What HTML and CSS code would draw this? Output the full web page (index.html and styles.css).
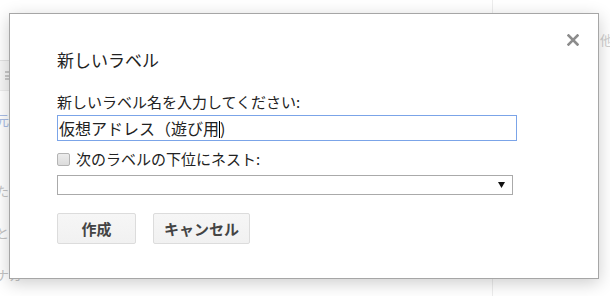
FILE: index.html
```html
<!DOCTYPE html>
<html lang="ja">
<head>
<meta charset="utf-8">
<title>新しいラベル</title>
<link rel="stylesheet" href="styles.css">
</head>
<body>
<div class="page">
  <div class="main">
    <div class="left">
      <div class="left-top"></div>
      <div class="toolbar"><span class="bars"></span></div>
      <div class="nav nav-blue">元</div>
      <div class="nav nav-1">たし</div>
      <div class="nav nav-2">とイ</div>
      <div class="nav nav-3">ナカ</div>
    </div>
  </div>
  <div class="rail"><span class="rail-text">他</span></div>
</div>

<div class="dialog" role="dialog">
  <button class="close" aria-label="閉じる">
    <svg width="12" height="12" viewBox="0 0 12 12"><path d="M1.5 1.5L10.5 10.5M10.5 1.5L1.5 10.5" stroke="#8c8c8c" stroke-width="2.6" stroke-linecap="square"/></svg>
  </button>
  <div class="title">新しいラベル</div>
  <div class="label">新しいラベル名を入力してください:</div>
  <div class="input">仮想アドレス（遊び用<span class="caret"></span>)</div>
  <div class="check-row"><span class="checkbox"></span><span>次のラベルの下位にネスト:</span></div>
  <div class="select"><svg class="arrow" width="7" height="6" viewBox="0 0 7 6"><path d="M0 0H7L3.5 6Z" fill="#111"/></svg></div>
  <div class="buttons">
    <button class="btn">作成</button>
    <button class="btn">キャンセル</button>
  </div>
</div>
</body>
</html>
```

FILE: styles.css
```css
* { box-sizing: border-box; }

html, body {
  margin: 0;
  padding: 0;
}

body {
  width: 610px;
  height: 296px;
  overflow: hidden;
  position: relative;
  background: #fff;
  font-family: "Noto Sans CJK JP", "Noto Sans", sans-serif;
  color: #222;
}

.page {
  display: grid;
  grid-template-columns: 492px 1fr;
  height: 296px;
}

.left {
  width: 60px;
  display: flex;
  flex-direction: column;
}

.left-top {
  height: 60px;
}

.toolbar {
  height: 31px;
  background: #f6f6f6;
  border-top: 1px solid #e2e2e2;
  border-bottom: 1px solid #ececec;
  display: flex;
  align-items: center;
  padding-left: 5px;
}

.bars {
  width: 5px;
  height: 9px;
  border-top: 2px solid #c9c9c9;
  border-bottom: 2px solid #c9c9c9;
  background: linear-gradient(#c9c9c9, #c9c9c9) center / 100% 2px no-repeat;
}

.nav {
  font-size: 13px;
  line-height: 16px;
  color: #c4c4c4;
  margin-left: -4px;
}

.nav-blue {
  color: #a9bde6;
  margin-top: 21px;
}

.nav-1 { margin-top: 55px; }
.nav-2 { margin-top: 26px; }
.nav-3 { margin-top: 26px; }

.rail {
  border-left: 1px solid #ededed;
  padding: 26px 0 0 107px;
}

.rail-text {
  font-size: 13px;
  color: #cfcfcf;
}

.dialog {
  position: absolute;
  left: 9px;
  top: 13px;
  width: 590px;
  height: 266px;
  background: #fff;
  border: 1px solid #a6a6a6;
  box-shadow: 0 4px 16px rgba(0, 0, 0, 0.2);
  padding: 34px 0 0 47px;
  font-size: 15px;
  color: #222;
}

.close {
  position: absolute;
  left: 556px;
  top: 19px;
  width: 14px;
  height: 14px;
  padding: 1px;
  border: 0;
  background: none;
  display: flex;
}

.title {
  font-size: 17px;
  line-height: 24px;
  color: #222;
}

.label {
  margin-top: 20px;
  line-height: 20px;
}

.input {
  margin-top: 3px;
  width: 460px;
  height: 26px;
  border: 1px solid #7ba4e8;
  padding: 0 1px;
  font-size: 16px;
  line-height: 24px;
  color: #222;
  white-space: nowrap;
}

.caret {
  display: inline-block;
  width: 1px;
  height: 17px;
  background: #000;
  vertical-align: -3px;
}

.check-row {
  margin-top: 8px;
  line-height: 20px;
  display: flex;
  align-items: center;
}

.checkbox {
  width: 13px;
  height: 13px;
  border: 1px solid #b4b4b4;
  border-radius: 2px;
  background: linear-gradient(#ececec, #dcdcdc);
  margin-right: 6px;
}

.select {
  margin-top: 6px;
  width: 456px;
  height: 20px;
  border: 1px solid #aaa;
  display: flex;
  align-items: center;
  justify-content: flex-end;
  padding-right: 7px;
}

.buttons {
  margin-top: 18px;
  display: flex;
  gap: 17px;
}

.btn {
  min-width: 79px;
  height: 31px;
  padding: 0 10px;
  border: 1px solid #dcdcdc;
  border-radius: 2px;
  background: linear-gradient(#f6f6f6, #f1f1f1);
  color: #444;
  font-family: "Noto Sans CJK JP", "Noto Sans", sans-serif;
  font-size: 15px;
  font-weight: bold;
  line-height: 29px;
}
```
